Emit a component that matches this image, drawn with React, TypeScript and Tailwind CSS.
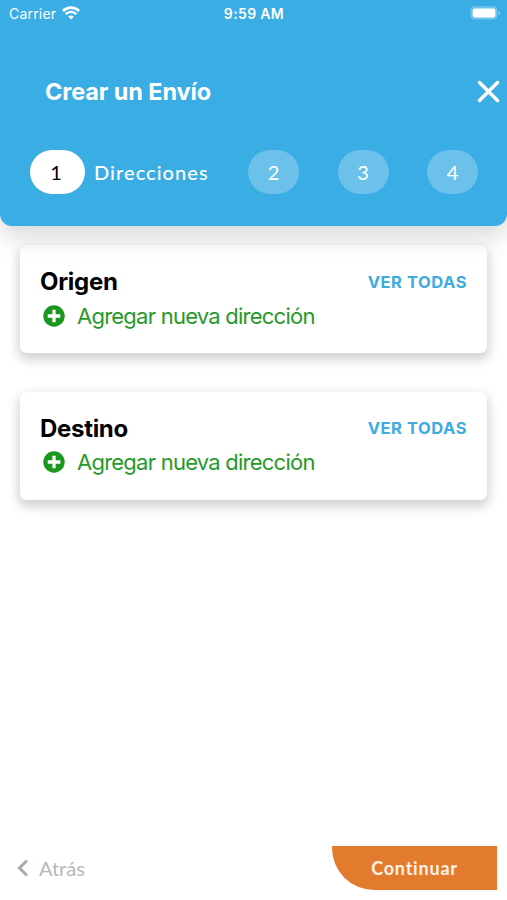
import React from "react";

function WifiIcon() {
  return (
    <svg width="18" height="14" viewBox="0 0 18 14" fill="none" stroke="white">
      <path d="M.9 4.900C5.500.5 12.500.5 17.100 4.900" strokeWidth="2.700" />
      <path d="M3.700 8.100C6.800 5.200 11.200 5.200 14.300 8.100" strokeWidth="2.400" />
      <path d="M6.100 10.600C7.700 9.100 10.300 9.100 11.900 10.600L9 13.600Z" fill="white" stroke="none" />
    </svg>
  );
}

function BatteryIcon() {
  return (
    <svg width="31" height="14" viewBox="0 0 31 14">
      <rect x="0.5" y="0.5" width="26.8" height="12.8" rx="4" fill="white" fillOpacity="0.25" stroke="white" strokeOpacity="0.12" />
      <rect x="2.700" y="2.500" width="22.600" height="9" rx="2" fill="white" />
      <path d="M28.600 5v4.200c2-.8 2-3.400 0-4.200z" fill="white" fillOpacity="0.4" />
    </svg>
  );
}

function PlusIcon() {
  return (
    <svg width="22" height="22" viewBox="0 0 22 22">
      <circle cx="11" cy="11" r="10.700" fill="#1b961e" />
      <path d="M11 4.700v12.600M4.700 11h12.600" stroke="white" strokeWidth="3.300" />
    </svg>
  );
}

function Step({ n }: { n: number }) {
  return (
    <div className="flex h-11 w-[51px] items-center justify-center rounded-[22px] bg-[#6bc1ea] pb-px text-[20px] text-white">
      {n}
    </div>
  );
}

function AddressCard({ title }: { title: string }) {
  return (
    <section className="h-[108px] rounded-[7px] bg-white px-5 pt-[21px] shadow-[0_5px_11px_2px_rgba(0,0,0,0.18)]">
      <div className="flex h-8 items-center justify-between">
        <h2 className="text-[24px] font-bold tracking-[-0.3px] text-black">{title}</h2>
        <button className="text-[16.500px] font-bold tracking-[0.55px] text-[#40abdf]">VER TODAS</button>
      </div>
      <button className="flex h-[35px] items-center pl-[3px] text-[22px] tracking-[-0.76px] text-[#269a29]">
        <PlusIcon />
        <span className="ml-[12px] pt-px whitespace-nowrap">Agregar nueva dirección</span>
      </button>
    </section>
  );
}

export default function App() {
  return (
    <div className="flex h-[900px] w-[507px] flex-col overflow-hidden bg-white font-['Inter',sans-serif]">
      <header className="relative z-10 h-[226px] shrink-0 rounded-b-[12px] bg-[#3aade4] text-white shadow-[0_10px_26px_rgba(0,0,0,0.16)]">
        <div className="grid h-[26px] grid-cols-3 items-center pr-[6px] pl-[9px]">
          <div className="flex items-center gap-[6px] text-[14px] tracking-[0.2px]">
            <span>Carrier</span>
            <WifiIcon />
          </div>
          <span className="pr-[2px] text-center text-[14px] font-semibold tracking-[0.35px]">9:59 AM</span>
          <div className="flex justify-end">
            <BatteryIcon />
          </div>
        </div>
        <div className="mt-[45px] flex h-10 items-center justify-between pr-[7px] pl-[45px]">
          <h1 className="pt-px text-[23.500px] font-bold tracking-[-0.1px]">Crear un Envío</h1>
          <button aria-label="Cerrar">
            <svg width="23" height="23" viewBox="0 0 23 23" stroke="white" strokeWidth="3.500" strokeLinecap="round">
              <path d="M2.500 2.500l18 18M20.500 2.500l-18 18" />
            </svg>
          </button>
        </div>
        <div className="mt-[39px] flex items-center pl-[30px] font-['Lato',sans-serif]">
          <div className="flex h-11 w-[55px] items-center justify-center rounded-[22px] bg-white pr-[3px] pb-px text-[20px] text-black">1</div>
          <span className="ml-[9px] w-[154px] pb-px text-[20px] font-medium tracking-[1.05px]">Direcciones</span>
          <div className="flex gap-[38.500px]">
            <Step n={2} />
            <Step n={3} />
            <Step n={4} />
          </div>
        </div>
      </header>
      <main className="flex flex-1 flex-col gap-[38.500px] px-5 pt-[19px]">
        <AddressCard title="Origen" />
        <AddressCard title="Destino" />
      </main>
      <footer className="mb-[10px] flex h-11 items-center justify-between pr-[10px] pl-[17px] font-['Lato',sans-serif]">
        <button className="flex items-center gap-[10px] text-[20px] text-[#b7b7b7]">
          <svg width="12" height="18" viewBox="0 0 12 18" fill="none" stroke="#aaaaaa" strokeWidth="3">
            <path d="M10 1.500L2.500 9l7.500 7.500" />
          </svg>
          <span>Atrás</span>
        </button>
        <button className="h-11 w-[165px] rounded-bl-[42px] bg-[#e37b2f] text-[18px] font-bold tracking-[0.8px] text-[#fff1e4]">Continuar</button>
      </footer>
    </div>
  );
}
